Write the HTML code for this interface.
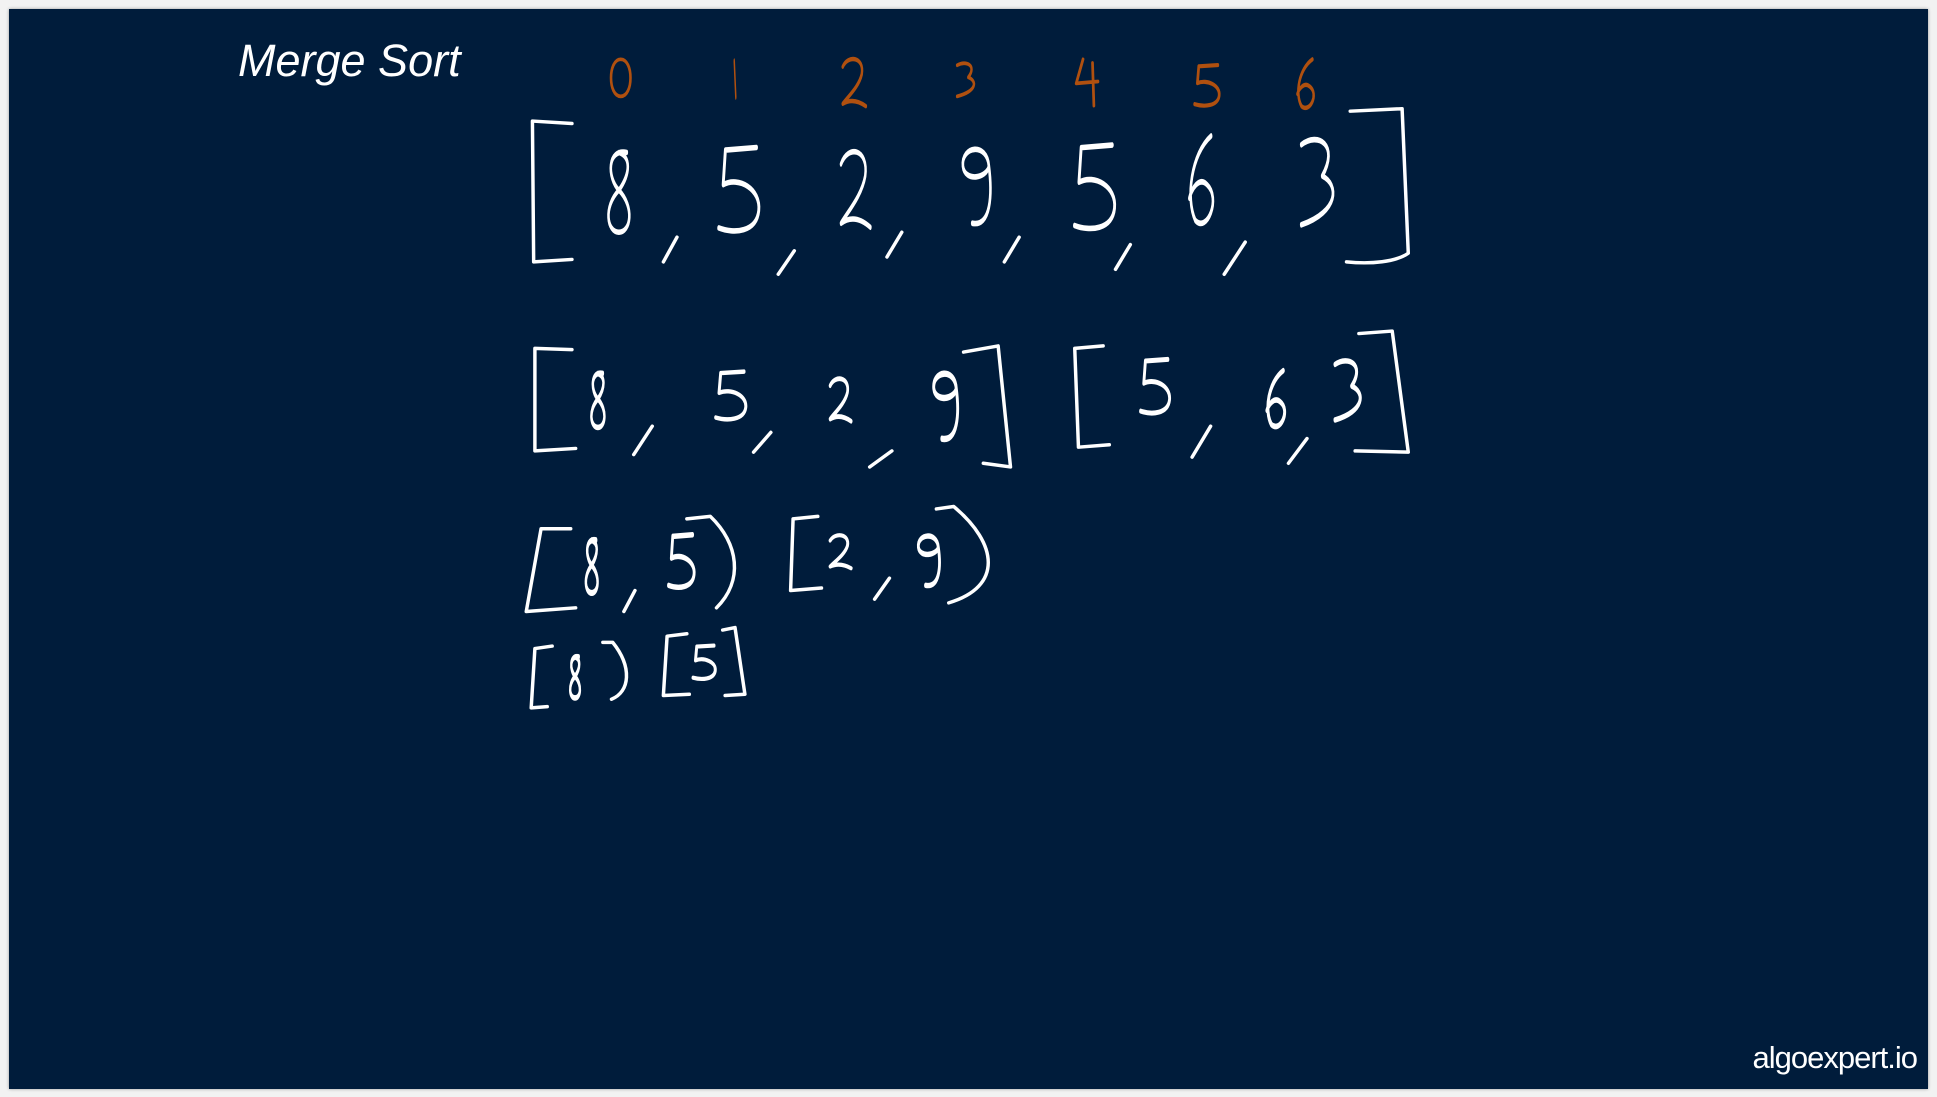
<!DOCTYPE html>
<html><head><meta charset="utf-8"><style>
html,body{margin:0;padding:0;background:#fff;}
.wrap{position:relative;width:1937px;height:1097px;overflow:hidden;background:#f2f2f2;}
.board{position:absolute;left:9px;top:9px;width:1919px;height:1080px;background:#001c3b;box-shadow:0 0 3px #999;}
.title{position:absolute;left:238px;top:35px;color:#fff;font:italic 45px "Liberation Sans",sans-serif;letter-spacing:0px;}
.brand{position:absolute;right:20px;top:1040px;color:#fff;font:31px "Liberation Sans",sans-serif;letter-spacing:-1px;}
svg{position:absolute;left:0;top:0;}
</style></head><body><div class="wrap">
<div class="board"></div>
<div class="title">Merge Sort</div>
<div class="brand">algoexpert.io</div>
<svg width="1937" height="1097" viewBox="0 0 1568 888" preserveAspectRatio="none">
<defs>
<path id="d8" d="M0.7,0.05 C0.2,0 0.2,0.35 0.5,0.5 C0.9,0.7 0.8,1 0.5,1 C0.2,1 0.1,0.7 0.5,0.5 C0.8,0.3 0.8,0.1 0.5,0.05"/>
<path id="d5" d="M0.9,0.02 L0.2,0.05 L0.15,0.45 C0.5,0.35 1,0.5 0.95,0.75 C0.9,1 0.4,1.02 0.05,0.95"/>
<path id="d2" d="M0.1,0.2 C0.3,-0.05 0.9,0 0.8,0.35 C0.7,0.6 0.3,0.8 0.1,0.95 C0.4,0.85 0.7,0.9 0.95,1"/>
<path id="d9" d="M0.85,0.25 C0.8,-0.05 0.1,0 0.15,0.25 C0.2,0.45 0.8,0.4 0.85,0.25 C0.95,0.6 0.9,1 0.4,0.95"/>
<path id="d3" d="M0.1,0.1 C0.5,-0.05 1,0.1 0.6,0.45 C1,0.55 1,0.85 0.1,1"/>
<path id="d6" d="M0.7,0 C0.2,0.2 0.05,0.7 0.3,0.95 C0.6,1.1 0.95,0.7 0.6,0.55 C0.4,0.45 0.2,0.6 0.15,0.7"/>
<path id="d0" d="M0.5,0 C0,0 0,1 0.5,1 C1,1 1,0 0.5,0 Z"/>
<path id="d1" d="M0.4,0 L0.6,1"/>
<path id="d4" d="M0.35,0 L0.1,0.65 L0.9,0.6 M0.7,0.1 L0.75,1.25"/>
</defs>
<g fill="none" stroke="#b0500f" stroke-width="2.6" stroke-linecap="round" stroke-linejoin="round">
<use href="#d0" transform="translate(492,48) scale(21,30)" style="stroke-width:0.1"/>
<use href="#d1" transform="translate(592,50) scale(6,28)" style="stroke-width:0.2"/>
<use href="#d2" transform="translate(680,46) scale(22,40)" style="stroke-width:0.09"/>
<use href="#d3" transform="translate(773,50) scale(18,28)" style="stroke-width:0.11"/>
<use href="#d4" transform="translate(869,48) scale(22,30)" style="stroke-width:0.1"/>
<use href="#d5" transform="translate(966,52) scale(22,34)" style="stroke-width:0.1"/>
<use href="#d6" transform="translate(1047,48) scale(22,40)" style="stroke-width:0.09"/>
</g>
<g fill="none" stroke="#fff" stroke-width="2.8" stroke-linecap="round" stroke-linejoin="round">
<path d="M463,100 L431,98 L432,212 L463,210"/>
<path d="M1093,90 L1135,88 L1140,205 C1130,212 1110,214 1090,212"/>
<path d="M548,192 L537,212 M643,203 L630,222 M730,188 L718,208 M825,192 L813,212 M915,198 L903,218 M1008,196 L991,222"/>
<use href="#d8" transform="translate(485,120) scale(32,68)" style="stroke-width:0.065"/>
<use href="#d5" transform="translate(580,118) scale(36,70)" style="stroke-width:0.065"/>
<use href="#d2" transform="translate(678,120) scale(28,64)" style="stroke-width:0.07"/>
<use href="#d9" transform="translate(775,118) scale(30,66)" style="stroke-width:0.07"/>
<use href="#d5" transform="translate(868,116) scale(36,70)" style="stroke-width:0.065"/>
<use href="#d6" transform="translate(958,110) scale(32,72)" style="stroke-width:0.065"/>
<use href="#d3" transform="translate(1050,110) scale(34,72)" style="stroke-width:0.065"/>
<path d="M463,283 L433,282 L433,365 L466,363"/>
<path d="M780,285 L808,280 L818,378 L796,375"/>
<path d="M893,280 L870,282 L873,362 L898,360"/>
<path d="M1100,270 L1127,268 L1140,366 L1097,365"/>
<path d="M528,345 L513,368 M624,350 L610,366 M722,365 L704,378 M980,345 L965,370 M1058,355 L1043,375"/>
<use href="#d8" transform="translate(474,300) scale(20,46)" style="stroke-width:0.1"/>
<use href="#d5" transform="translate(578,300) scale(27,40)" style="stroke-width:0.09"/>
<use href="#d2" transform="translate(670,305) scale(20,36)" style="stroke-width:0.11"/>
<use href="#d9" transform="translate(752,300) scale(26,58)" style="stroke-width:0.09"/>
<use href="#d5" transform="translate(922,290) scale(26,45)" style="stroke-width:0.09"/>
<use href="#d6" transform="translate(1022,300) scale(24,46)" style="stroke-width:0.1"/>
<use href="#d3" transform="translate(1078,290) scale(27,50)" style="stroke-width:0.09"/>
<path d="M462,428 L438,428 L426,495 L466,492"/>
<path d="M556,420 L575,418 C598,440 602,470 580,492"/>
<path d="M662,418 L642,420 L640,478 L665,476"/>
<path d="M758,412 L772,410 C808,440 812,475 768,488"/>
<path d="M514,478 L505,495 M720,468 L708,485"/>
<use href="#d8" transform="translate(470,435) scale(18,45)" style="stroke-width:0.11"/>
<use href="#d5" transform="translate(540,432) scale(23,44)" style="stroke-width:0.1"/>
<use href="#d2" transform="translate(670,432) scale(20,28)" style="stroke-width:0.12"/>
<use href="#d9" transform="translate(740,432) scale(23,44)" style="stroke-width:0.1"/>
<path d="M447,523 L433,525 L430,573 L443,572"/>
<path d="M488,520 L496,520 C512,540 510,560 495,566"/>
<path d="M556,513 L540,515 L537,563 L558,562"/>
<path d="M585,510 L595,508 L603,562 L587,563"/>
<use href="#d8" transform="translate(458,530) scale(15,35)" style="stroke-width:0.13"/>
<use href="#d5" transform="translate(560,522) scale(20,28)" style="stroke-width:0.12"/>
</g>
</svg>
</div></body></html>
